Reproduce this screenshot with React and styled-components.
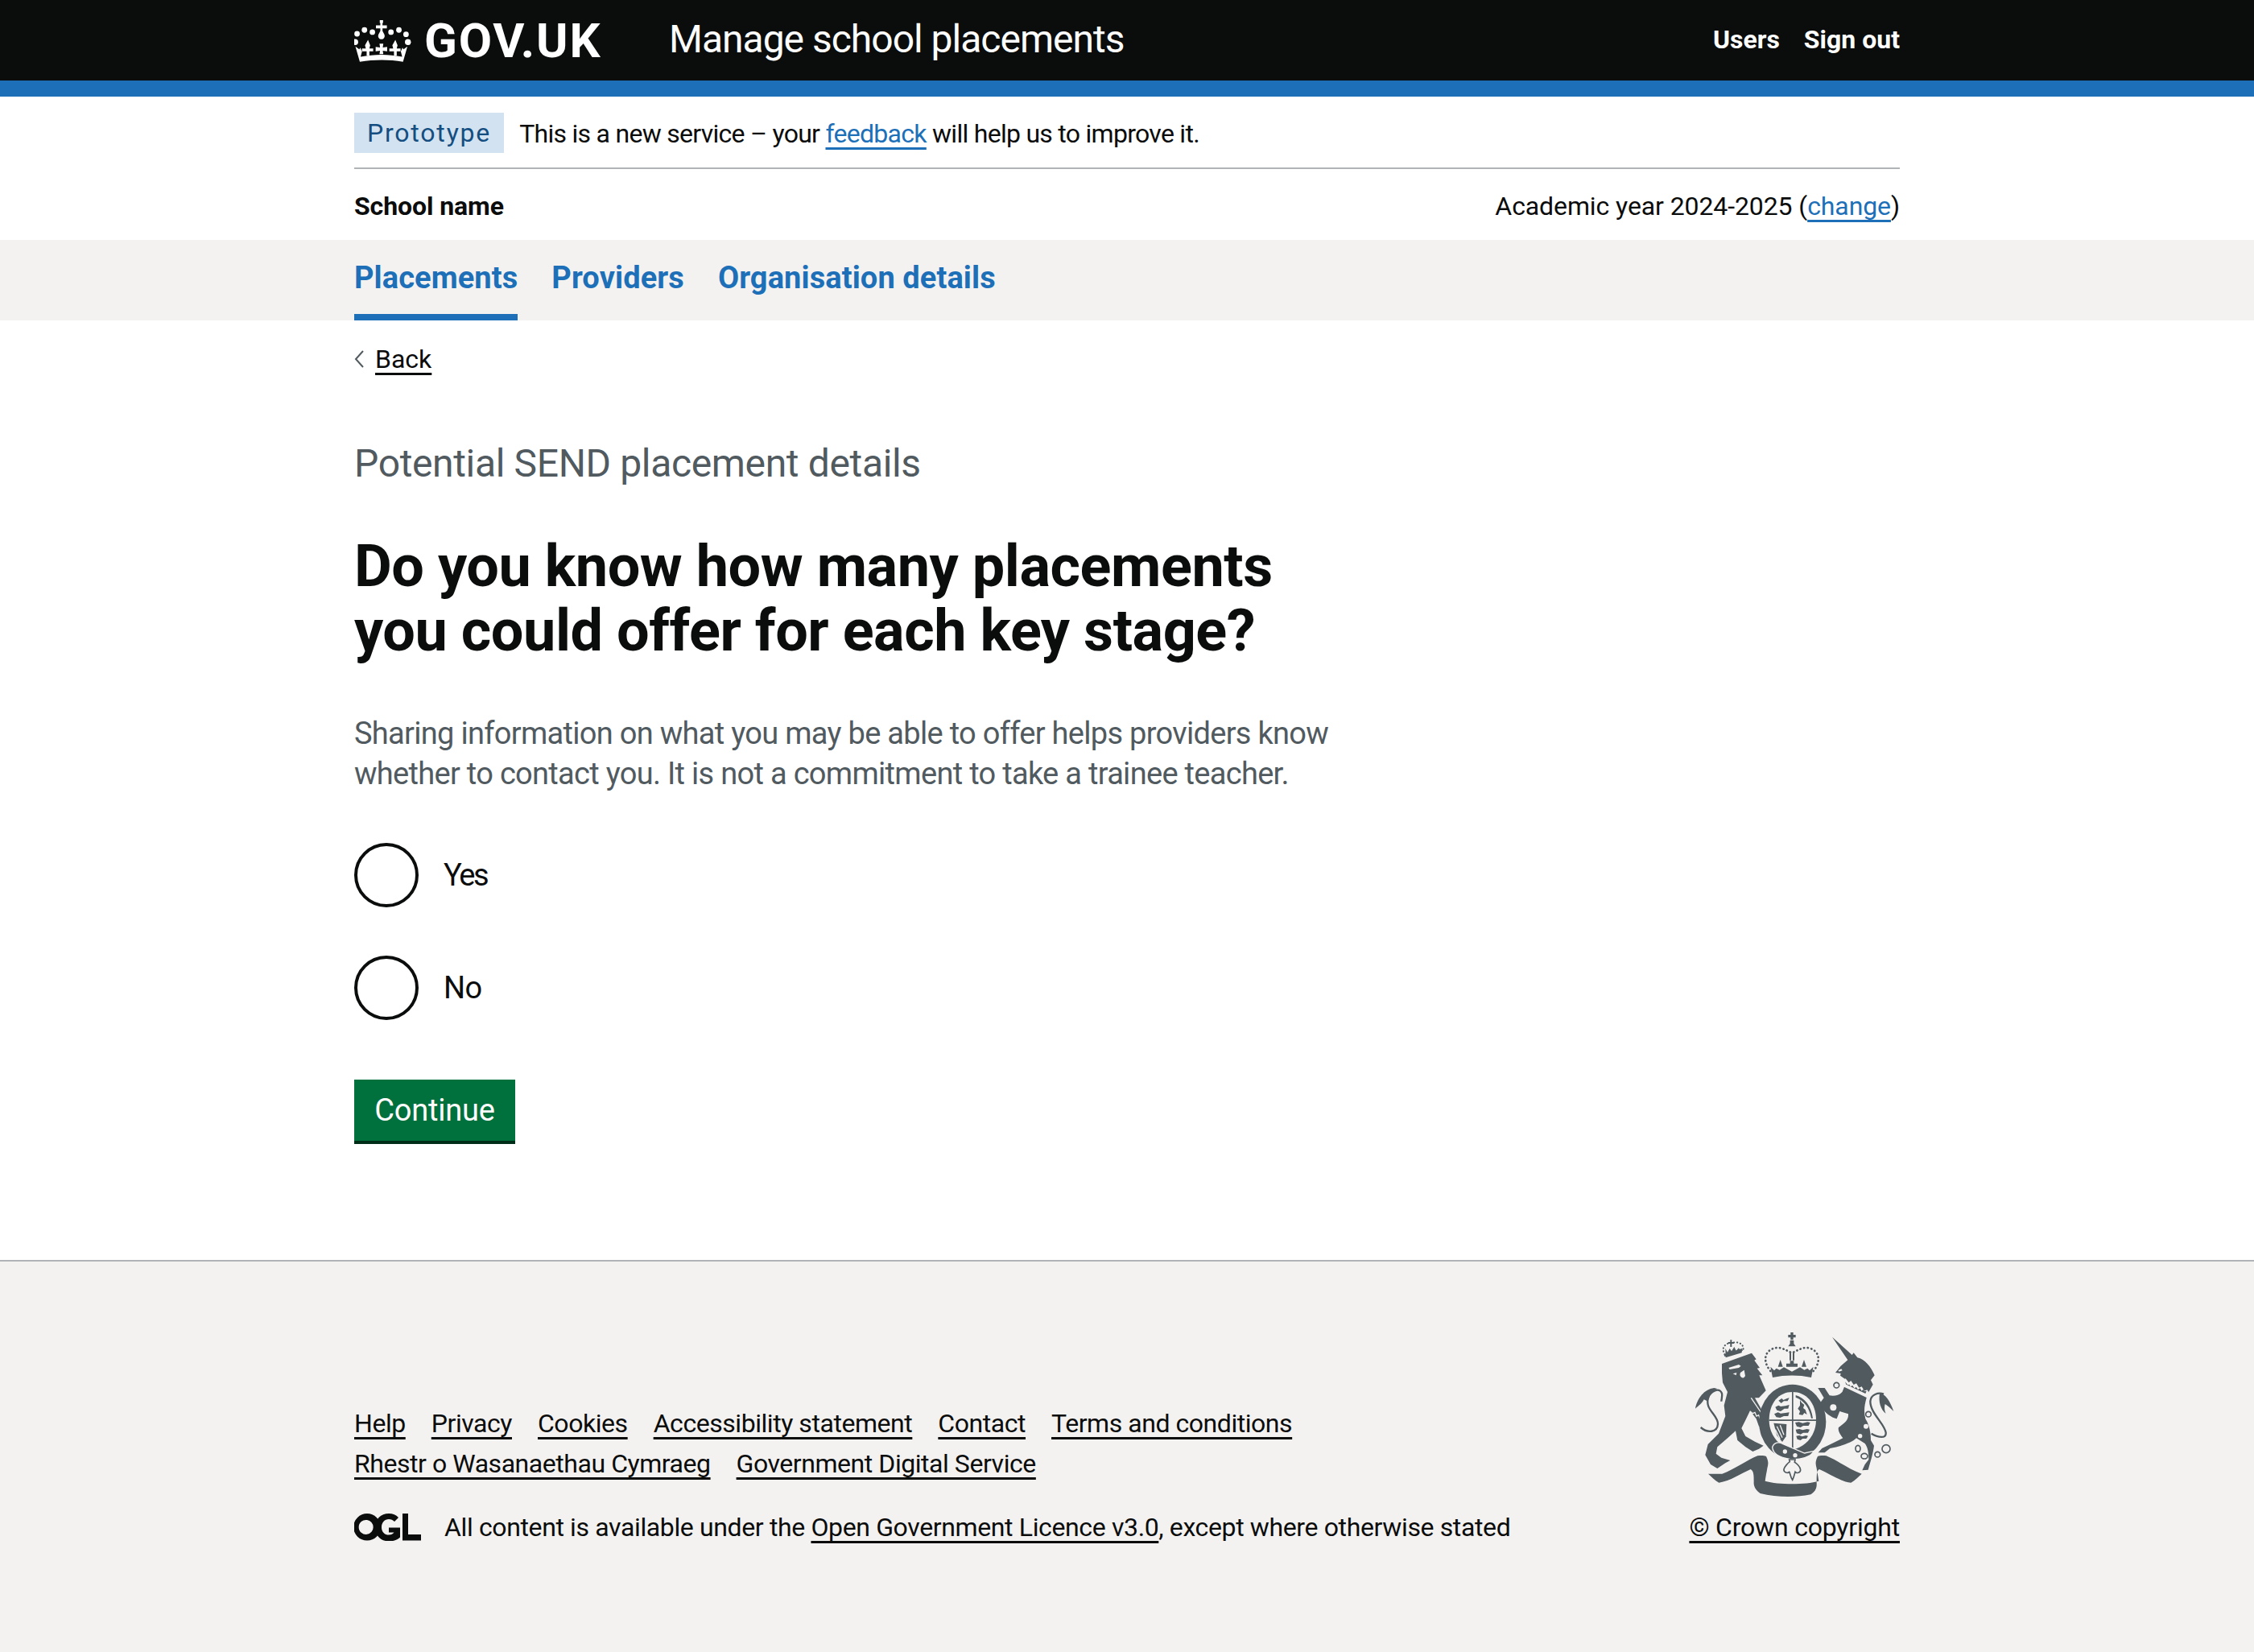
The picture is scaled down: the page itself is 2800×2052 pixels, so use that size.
import styled, { createGlobalStyle } from "styled-components";

const GlobalStyle = createGlobalStyle`
  html, body { margin: 0; padding: 0; background: #fff; }
  body {
    font-family: Roboto, "Liberation Sans", Arial, sans-serif;
    color: #0b0c0c;
  }
  #root { min-height: 100vh; display: flex; flex-direction: column; }
`;

const Container = styled.div`
  width: 1920px;
  margin: 0 auto;
`;

const Header = styled.header`
  background: #0b0c0c;
  height: 100px;
  border-bottom: 20px solid #1d70b8;
`;

const HeaderInner = styled(Container)`
  height: 100%;
  display: flex;
  align-items: center;
`;

const Logo = styled.a`
  display: flex;
  align-items: center;
  gap: 16px;
  width: 391px;
  color: #fff;
  font-size: 60px;
  font-weight: 700;
  letter-spacing: 1.8px;
`;

const ServiceName = styled.a`
  color: #fff;
  font-size: 48px;
  letter-spacing: -1px;
  padding-bottom: 3px;
`;

const HeaderNav = styled.nav`
  margin-left: auto;
  display: flex;
  gap: 30px;
  color: #fff;
  font-size: 32px;
  font-weight: 700;
  padding-bottom: 3px;
`;

const PhaseBanner = styled(Container)`
  display: flex;
  align-items: center;
  gap: 19px;
  padding: 20px 0 18px;
  border-bottom: 2px solid #b1b4b6;
  font-size: 32px;
  line-height: 40px;
  letter-spacing: -0.72px;
`;

const PhaseText = styled.span`
  padding-top: 1px;
`;

const Tag = styled.strong`
  background: #d2e2f1;
  color: #144e81;
  font-weight: 400;
  letter-spacing: 1.8px;
  padding: 5px 16px;
`;

const BlueLink = styled.a`
  color: #1d70b8;
  text-decoration: underline;
  text-decoration-thickness: 3px;
  text-underline-offset: 6px;
  text-decoration-skip-ink: none;
`;

const OrgRow = styled(Container)`
  height: 88px;
  padding-top: 3px;
  box-sizing: border-box;
  display: flex;
  align-items: center;
  justify-content: space-between;
  font-size: 32px;
  letter-spacing: -0.1px;
`;

const OrgName = styled.strong`
  font-weight: 700;
`;

const NavBand = styled.nav`
  background: #f3f2f1;
  height: 100px;
`;

const NavList = styled(Container)`
  height: 100%;
  display: flex;
  gap: 42px;
`;

const NavItem = styled.a`
  display: flex;
  align-items: center;
  color: #1d70b8;
  font-size: 38px;
  font-weight: 700;
  letter-spacing: 0.1px;
  padding-top: 1px;
  box-sizing: border-box;
  border-bottom: 8px solid ${(p) => (p.$active ? "#1d70b8" : "transparent")};
`;

const Main = styled(Container)`
  padding-top: 28px;
`;

const BackLink = styled.a`
  display: flex;
  align-items: center;
  gap: 14px;
  font-size: 32px;
  line-height: 40px;
  & > span {
    text-decoration: underline;
    text-decoration-thickness: 3px;
    text-underline-offset: 6px;
    text-decoration-skip-ink: none;
  }
`;

const Caption = styled.div`
  margin-top: 80px;
  font-size: 48px;
  line-height: 60px;
  color: #505a5f;
  letter-spacing: -0.35px;
`;

const Heading = styled.h1`
  margin: 58px 0 0;
  font-size: 72px;
  line-height: 80px;
  font-weight: 700;
  letter-spacing: -0.45px;
  width: 1200px;
`;

const Lead = styled.p`
  margin: 62px 0 0;
  font-size: 38px;
  line-height: 50px;
  color: #505a5f;
  letter-spacing: -0.7px;
  width: 1280px;
`;

const Radios = styled.div`
  margin-top: 61px;
  display: flex;
  flex-direction: column;
  gap: 60px;
`;

const RadioRow = styled.label`
  display: flex;
  align-items: center;
  gap: 31px;
  font-size: 38px;
  letter-spacing: ${(p) => p.$spacing || "-0.7px"};
`;

const RadioCircle = styled.span`
  width: 80px;
  height: 80px;
  box-sizing: border-box;
  border: 4px solid #0b0c0c;
  border-radius: 50%;
  background: #fff;
`;

const Button = styled.button`
  display: block;
  margin-top: 74px;
  width: 200px;
  height: 80px;
  padding: 0 0 4px;
  border: 0;
  background: #00703c;
  box-shadow: inset 0 -4px 0 #002d18;
  color: #fff;
  font-family: inherit;
  font-size: 38px;
  letter-spacing: -0.2px;
`;

const Footer = styled.footer`
  margin-top: 144px;
  flex-grow: 1;
  background: #f3f2f1;
  border-top: 2px solid #b1b4b6;
  padding: 82px 0 127px;
`;

const FooterInner = styled(Container)`
  display: flex;
  justify-content: space-between;
  align-items: flex-end;
  font-size: 32px;
  line-height: 50px;
  letter-spacing: -0.45px;
`;

const FooterLinks = styled.div`
  display: flex;
  gap: 32px;
`;

const BlackLink = styled.a`
  color: #0b0c0c;
  text-decoration: underline;
  text-decoration-thickness: 3px;
  text-underline-offset: 6px;
  text-decoration-skip-ink: none;
`;

const Licence = styled.div`
  margin-top: 29px;
  display: flex;
  align-items: center;
  gap: 29px;
  letter-spacing: -0.37px;
`;

const CopyrightBlock = styled.div`
  display: flex;
  flex-direction: column;
  align-items: flex-end;
  gap: 3px;
  letter-spacing: -0.2px;
`;

const CrownLogo = () => (
  <svg width="71" height="53" viewBox="38 35 208 156" fill="#fff">
    <path d="M131 38h12v10h-2v9h16v11h-16v10l7 13a12 12 0 1 1-22 0l7-13V68h-16V57h16v-9h-2z" />
    <circle cx="48" cy="88" r="10" />
    <circle cx="75" cy="74" r="10" />
    <circle cx="104" cy="82" r="10" />
    <circle cx="172" cy="82" r="10" />
    <circle cx="201" cy="74" r="10" />
    <circle cx="227" cy="90" r="10" />
    <circle cx="41" cy="118" r="11" />
    <circle cx="234" cy="118" r="11" />
    <path d="M88 110l8 20-3 12h14v10H93v16H83v-16H66v-10h14l-3-12z" />
    <path d="M188 110l8 20-3 12h14v10h-14v16h-10v-16h-17v-10h14l-3-12z" />
    <path d="M130 124h14l-2 14 16-2v16l-16-2 2 12h-14l2-12-16 2v-16l16 2z" />
    <path d="M42 134l14 11 4-6 6 14-5 19c50-10 102-10 152 0l-5-19 6-14 4 6 14-11-16 56c-50-8-104-8-158 0z" />
  </svg>
);

const Crest = () => (
  <svg width="260" height="220" viewBox="0 0 780 660" fill="#505a5f">
    {/* lion */}
    <path d="M117 135L228 95l17 23-7 4 20 28-10 2 20 26-12 0 25 57-26 27-15 0 50 88-7 22-28-4-10-28-23-30-17 35-15 30 15 30 35 20 32 15-17 12-23 10-27-17-30-25-7-35-28 25-40 35-5 25 20 15 33 10-18 10-30 20-25-15-20-35 10-40 40-40 25-65-5-40 13-50-18-35-3-35z" />
    <path d="M142 150l38-12 8 5-8 7-34 6zM158 172l14-4-2 10zM186 168a10 13 0 1 0 18 12l-4-22z" fill="#f3f2f1" />
    <path d="M226 262l62 92" stroke="#f3f2f1" strokeWidth="4" fill="none" />
    <path d="M222 312l10 8 8-4 6 14 8-4 6 16" stroke="#f3f2f1" strokeWidth="4" fill="none" />
    <path d="M38 372c25 22 62 20 64-12 2-35-52-55-35-100 8-24 40-38 50-15 3 10-2 22-2 30" fill="none" stroke="#505a5f" strokeWidth="7" />
    <path d="M18 302C25 265 50 230 88 225l12 3c-25 12-30 27-35 47l-15-7c-5 12-20 24-32 34z" />
    <g fill="none" stroke="#505a5f" strokeWidth="6" strokeDasharray="1 11" strokeLinecap="round">
      <path d="M128 100c-18-28 8-44 24-42 14-6 38-4 44 14 2 6 0 12-2 16" />
    </g>
    <path d="M148 46h6v8h8v6h-8v12h-6V60h-8v-6h8zM130 78l8 14 8-14 7 10 10-16 7 14 10-10 6 10 7-8-2 16-60 18zM124 100l68-22 3 8-68 22z" />
    {/* royal crown */}
    <path d="M373 18h10v9h9v10h-9v9h-10v-9h-9V27h9zM371 48h14v12l7 10h-28l7-10z" />
    <path d="M369 94h6v28h-6zM381 94h6v28h-6z" />
    <g fill="none" stroke="#505a5f" strokeWidth="8" strokeDasharray="1 13" strokeLinecap="round">
      <path d="M298 162c-32-38-22-82 25-87 18 0 35 10 55 20 20-10 37-20 55-20 47 5 57 49 25 87" />
    </g>
    <path d="M298 146l14 14 8-8 12 6 16-10 30 16 30-16 16 10 12-6 8 8 14-14-8 40c-48-10-96-10-144 0z" />
    <path d="M335 120l9 26h-18zM423 120l9 26h-18zM371 124h14v10h14v12h-42v-12h14z" />
    {/* garter and shield */}
    <ellipse cx="380" cy="351" rx="125" ry="139" />
    <path d="M310 198c44-12 96-12 140 0l6 12c-50-12-102-12-152 0z" fill="#f3f2f1" />
    <path d="M380 240c50 0 88 40 88 105 0 55-38 100-88 110-50-10-87-55-87-110 0-65 37-105 87-105z" fill="#f3f2f1" />
    <path d="M378 240h5v212h-5zM293 343h175v5H293z" />
    <path d="M328 272l12-8 6 6 14-6 8-2-6 12-14 0-10 8zM316 296l12-6 8 4 18-2 14-4-4 14h-14l-14 10-14-4zM312 322l14-6 10 4 18-2 14-2-4 14-16 0-14 6-14-2z" />
    <path d="M392 252c34 10 58 40 64 86h-6c-6-38-26-66-58-78z" />
    <path d="M408 270l6 10 10 8-4 12 8 6 6 18-10-6-6 8-14-2 4-12-8-10 8-12z" />
    <path d="M390 354l14-2 14 4 18-4 10 2-6 12-20 0-10 6-14-4zM392 380l14-2 12 4 16-4 10 2-6 12-18 0-10 6-14-4zM394 404l12-2 10 4 14-4 8 2-6 10-14 0-8 6-12-4z" />
    <path d="M310 356l48 4-2 46-14 20-20-24z" />
    <path d="M322 368l20 42M334 364l14 36M316 380l18 36" stroke="#f3f2f1" strokeWidth="4" fill="none" />
    <path d="M305 446c6-18 25-22 40-12l80 34 35-8c-10 22-50 34-90 30-30-4-62-14-65-44z" stroke="#f3f2f1" strokeWidth="4" />
    <circle cx="352" cy="462" r="8" fill="#f3f2f1" />
    <circle cx="390" cy="476" r="8" fill="#f3f2f1" />
    {/* fleur */}
    <path d="M368 492h22l-2 10c8 4 22 18 22 28 0 12-16 14-20 8-2 6-4 18-10 30-8-12-8-24-12-30-6 6-22 2-20-10 2-10 16-24 22-28z" fill="none" stroke="#505a5f" strokeWidth="5" />
    {/* unicorn */}
    <path d="M528 35L602 102l6-8 14 18c28 6 50 33 64 66l-14 18 8 16-16 28-8 22c-8 28-11 53-4 78 16 25 20 55 20 80l12 20c-4 30-12 55-22 90l-22 2 10-22 14-18c0-27-4-47-14-60l-32-20c-18 18-58 30-98 38l-20 16h-24l14-16 30-14 48-24c-10-14-20-27-16-40 20-14 38-27 36-50l-32-10-11 28c-20-5-45-20-65-55l17-23-22-37h25l18 28c17 4 37 0 48-14l14-36-5-12-17-12 2-8-20-3 20-25 26-22z" />
    <path d="M566 196l12-6 12 15 8-7 10 15 10-5 10 16 10-4 10 16 10-4 7 10-7 20-92-44z" fill="#f3f2f1" />
    <path d="M576 202l4 10 72 34 4-10-8 2-4-8-6 6-6-10-8 6-6-10-8 4-6-10-8 4-4-8-6 2z" />
    <path d="M550 160l12-6 4 6-12 4z" fill="#f3f2f1" />
    <g fill="none" stroke="#505a5f" strokeWidth="5">
      <circle cx="544" cy="215" r="10" />
      <circle cx="663" cy="323" r="10" />
      <ellipse cx="624" cy="451" rx="9" ry="12" />
      <ellipse cx="648" cy="479" rx="12" ry="10" />
      <circle cx="697" cy="473" r="10" />
      <circle cx="729" cy="452" r="15" />
    </g>
    <circle cx="532" cy="298" r="12" fill="#f3f2f1" />
    <circle cx="522" cy="240" r="7" fill="#f3f2f1" />
    <circle cx="654" cy="368" r="9" fill="#f3f2f1" />
    <circle cx="632" cy="404" r="8" fill="#f3f2f1" />
    <path d="M674 395c26 15 56 20 54-3-3-32-58-72-58-117 2-25 30-35 50-27" fill="none" stroke="#505a5f" strokeWidth="7" />
    <path d="M705 245c20 0 40 30 52 67-12-12-22-20-32-27-3 10-3 25 3 35-20-15-28-45-23-75z" />
    {/* ribbon */}
    <path d="M118 545c50-18 90-50 132-67 12-2 24-2 32 2 10 20 8 30 4 44-2 14-6 30-8 48 50 14 150 14 200 0-2-18-6-34-8-48-4-14-6-24 4-44 8-4 20-4 32-2 42 17 82 49 132 67-10 8-24 24-40 33-40-4-80-34-118-50-10 4-10 24-10 50 2 24-8 34-22 44-60 12-130 10-188-4-14-10-26-24-24-44 0-22 0-40-12-46-36 16-76 44-118 50-16-9-30-25-40-33z" />
  </svg>
);

const OglLogo = () => (
  <svg width="83" height="34" viewBox="0 0 83 34" fill="#0b0c0c">
    <path fillRule="evenodd" d="M16 0a16 16 0 1 1 0 33.6a16 16 0 0 1 0-33.6zm0 8a9 9 0 1 0 0 17.8a9 9 0 0 0 0-17.8z" />
    <path d="M43 0c5 0 9 1.800 12 5l-5 5c-2-2-4.200-3-7-3-5 0-9 4-9 10s4 9.600 9 9.600c3 0 5-1 6.500-3H43v-6h14v12c-3 3.400-8 4.800-14 4.800-10 0-17-7-17-17.200S33 0 43 0z" />
    <path d="M60 0h7v26h16v7.600H60z" />
  </svg>
);

const App = () => {
  return (
    <>
      <GlobalStyle />
      <Header>
        <HeaderInner>
          <Logo>
            <CrownLogo />
            GOV.UK
          </Logo>
          <ServiceName>Manage school placements</ServiceName>
          <HeaderNav>
            <span>Users</span>
            <span>Sign out</span>
          </HeaderNav>
        </HeaderInner>
      </Header>

      <PhaseBanner>
        <Tag>Prototype</Tag>
        <PhaseText>
          This is a new service – your <BlueLink>feedback</BlueLink> will help
          us to improve it.
        </PhaseText>
      </PhaseBanner>

      <OrgRow>
        <OrgName>School name</OrgName>
        <span>
          Academic year 2024-2025 (<BlueLink>change</BlueLink>)
        </span>
      </OrgRow>

      <NavBand>
        <NavList>
          <NavItem $active>Placements</NavItem>
          <NavItem>Providers</NavItem>
          <NavItem>Organisation details</NavItem>
        </NavList>
      </NavBand>

      <Main>
        <BackLink>
          <svg width="12" height="22" viewBox="0 0 12 22" fill="none" stroke="#505a5f" strokeWidth="2">
            <path d="M11 1L2 11l9 10" />
          </svg>
          <span>Back</span>
        </BackLink>
        <Caption>Potential SEND placement details</Caption>
        <Heading>Do you know how many placements you could offer for each key stage?</Heading>
        <Lead>
          Sharing information on what you may be able to offer helps providers
          know whether to contact you. It is not a commitment to take a trainee
          teacher.
        </Lead>
        <Radios>
          <RadioRow $spacing="-2.4px">
            <RadioCircle />
            Yes
          </RadioRow>
          <RadioRow>
            <RadioCircle />
            No
          </RadioRow>
        </Radios>
        <Button>Continue</Button>
      </Main>

      <Footer>
        <FooterInner>
          <div>
            <FooterLinks>
              <BlackLink>Help</BlackLink>
              <BlackLink>Privacy</BlackLink>
              <BlackLink>Cookies</BlackLink>
              <BlackLink>Accessibility statement</BlackLink>
              <BlackLink>Contact</BlackLink>
              <BlackLink>Terms and conditions</BlackLink>
            </FooterLinks>
            <FooterLinks>
              <BlackLink>Rhestr o Wasanaethau Cymraeg</BlackLink>
              <BlackLink>Government Digital Service</BlackLink>
            </FooterLinks>
            <Licence>
              <OglLogo />
              <span>
                All content is available under the{" "}
                <BlackLink>Open Government Licence v3.0</BlackLink>, except
                where otherwise stated
              </span>
            </Licence>
          </div>
          <CopyrightBlock>
            <Crest />
            <BlackLink>© Crown copyright</BlackLink>
          </CopyrightBlock>
        </FooterInner>
      </Footer>
    </>
  );
};

export default App;
